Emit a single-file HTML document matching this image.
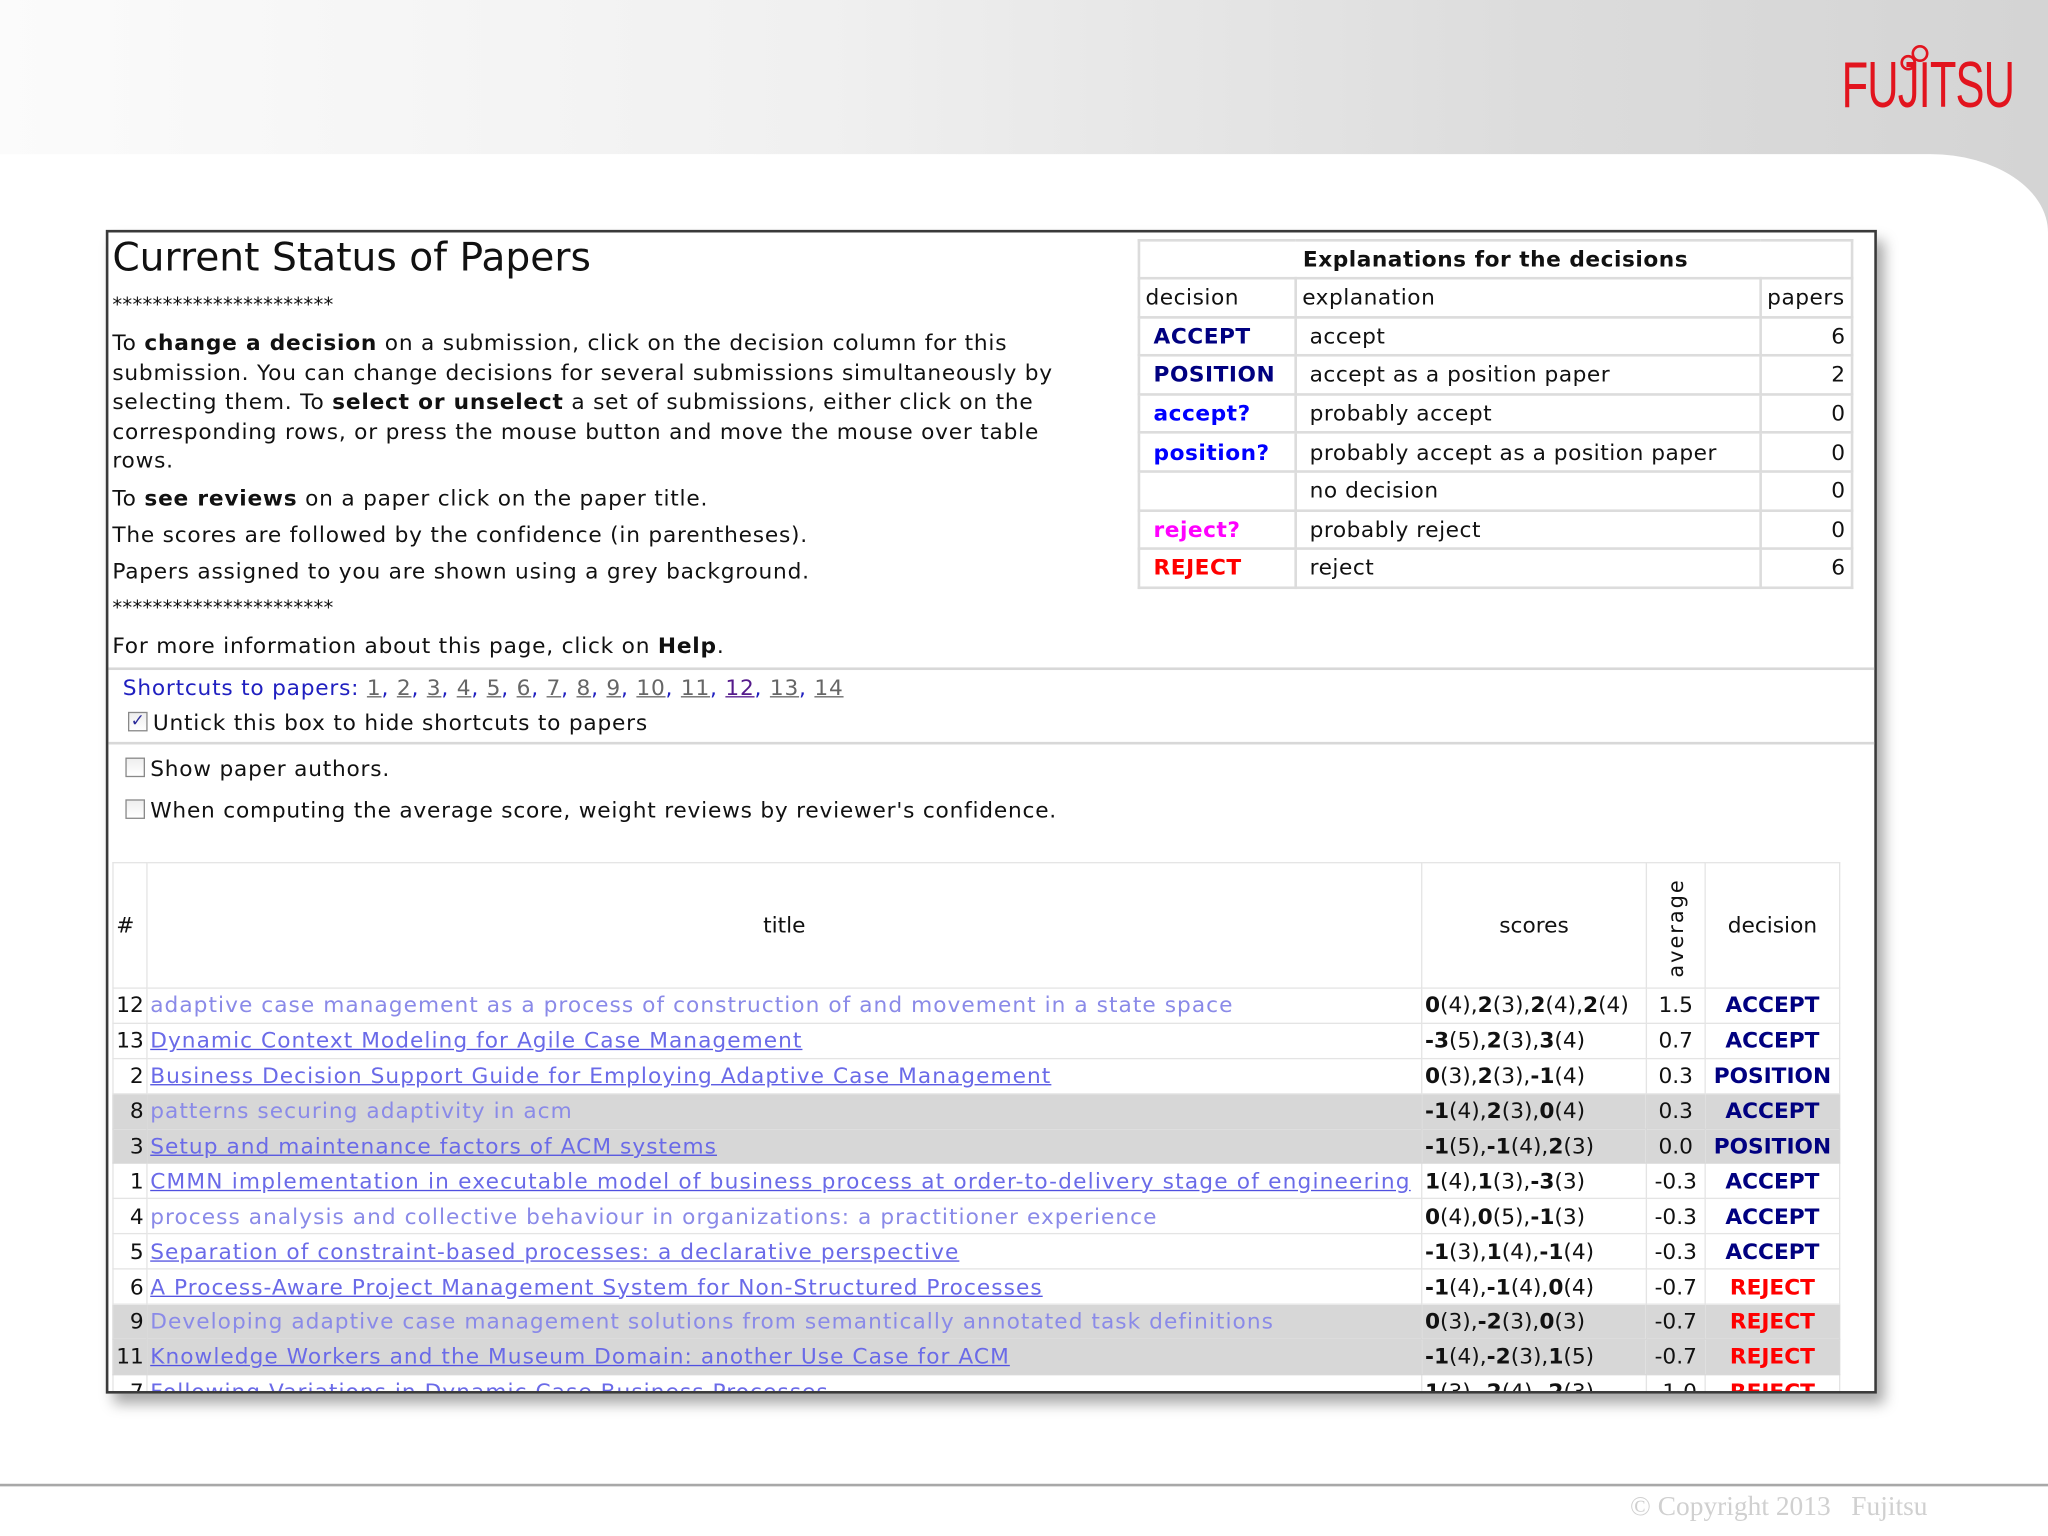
<!DOCTYPE html>
<html><head><meta charset="utf-8">
<style>
html,body{margin:0;padding:0;width:2048px;height:1536px;overflow:hidden;background:#fff}
#w{position:absolute;left:0;top:0;width:1568px;height:1176px;transform:scale(1.30612);transform-origin:0 0;font-family:"DejaVu Sans","Liberation Sans",sans-serif;color:#111;overflow:hidden}
.bg{position:absolute;left:0;top:0;width:1568px;height:260px;background:linear-gradient(90deg,#fbfbfb 0%,#f0f0f0 40%,#dcdcdc 75%,#d4d4d4 100%)}
.white{position:absolute;left:-20px;top:118px;width:1588px;height:1100px;background:#fff;border-top-right-radius:90px 60px}
.abs{position:absolute;white-space:nowrap}
.logo{position:absolute;left:1410px;top:36px;font-family:"Liberation Sans",sans-serif;font-size:50px;color:#e2141e;letter-spacing:-1px;transform:scaleX(0.665);transform-origin:0 0;font-weight:normal}
#frame{position:absolute;left:81px;top:176px;width:1352px;height:887px;border:2px solid #3a3a3a;background:#fff;box-shadow:6px 8px 10px rgba(0,0,0,0.35);overflow:hidden}
.t{font-size:16.6px;line-height:22.5px;letter-spacing:0.6px}
table{border-collapse:collapse}
.ex td{border:2px solid #dcdcdc;font-size:16.6px;height:27.6px;padding:0 4px;letter-spacing:0.4px}
.d1{color:#000080;font-weight:bold}
.d2{color:#0000ff;font-weight:bold}
.rq{color:#ff00ff;font-weight:bold}
.rj{color:#ff0000;font-weight:bold}
.mt{table-layout:fixed}
.mt td{border:1px solid #e4e4e4;font-size:16.6px;height:25.9px;padding:0 2px;white-space:nowrap;overflow:hidden}
.mt tr.g td{background:#d7d7d7;border-color:#d7d7d7}
.lnk{color:#6a6ae8;text-decoration:underline;text-decoration-color:#5050e0;letter-spacing:0.8px}
.lnk2{color:#8a8ae8;letter-spacing:0.8px}
.sc b{font-weight:bold}
.sc{font-size:16.6px}
.cb{display:inline-block;width:13px;height:13px;border:1px solid #888;background:linear-gradient(#eee,#fff);vertical-align:-1px;margin-right:4px;position:relative}
</style></head><body>
<div id="w">
<div class="bg"></div>
<div class="white"></div>
<div class="logo">FUJITSU</div>
<svg class="abs" style="left:1452px;top:32px" width="30" height="26" viewBox="0 0 30 26"><circle cx="9" cy="16" r="5" fill="none" stroke="#e2141e" stroke-width="2"/><circle cx="18" cy="9" r="5.5" fill="none" stroke="#e2141e" stroke-width="2"/></svg>

<div id="frame">
 <div class="abs" style="left:3px;top:2px;font-size:30px">Current Status of Papers</div>
 <div class="abs t" style="left:3px;top:44px;font-size:15px;letter-spacing:0.2px">**********************</div>
 <div class="abs t" style="left:3px;top:74px;width:752px;white-space:normal">To <b>change a decision</b> on a submission, click on the decision column for this submission. You can change decisions for several submissions simultaneously by selecting them. To <b>select or unselect</b> a set of submissions, either click on the corresponding rows, or press the mouse button and move the mouse over table rows.</div>
 <div class="abs t" style="left:3px;top:193px">To <b>see reviews</b> on a paper click on the paper title.</div>
 <div class="abs t" style="left:3px;top:221px">The scores are followed by the confidence (in parentheses).</div>
 <div class="abs t" style="left:3px;top:249px">Papers assigned to you are shown using a grey background.</div>
 <div class="abs t" style="left:3px;top:276px;font-size:15px;letter-spacing:0.2px">**********************</div>
 <div class="abs t" style="left:3px;top:306px">For more information about this page, click on <b>Help</b>.</div>
 <div class="abs" style="left:0;top:333px;width:1352px;border-top:2px solid #d8d8d8"></div>
 <div class="abs t" style="left:11px;top:338px;color:#2020c0">Shortcuts to papers: <span style="color:#666;text-decoration:underline">1</span>, <span style="color:#666;text-decoration:underline">2</span>, <span style="color:#666;text-decoration:underline">3</span>, <span style="color:#666;text-decoration:underline">4</span>, <span style="color:#666;text-decoration:underline">5</span>, <span style="color:#666;text-decoration:underline">6</span>, <span style="color:#666;text-decoration:underline">7</span>, <span style="color:#666;text-decoration:underline">8</span>, <span style="color:#666;text-decoration:underline">9</span>, <span style="color:#666;text-decoration:underline">10</span>, <span style="color:#666;text-decoration:underline">11</span>, <span style="color:#551a8b;text-decoration:underline">12</span>, <span style="color:#666;text-decoration:underline">13</span>, <span style="color:#666;text-decoration:underline">14</span></div>
 <div class="abs t" style="left:15px;top:365px"><span class="cb"><span style="position:absolute;left:1px;top:-4px;font-size:13px;color:#2a2a9a">✓</span></span>Untick this box to hide shortcuts to papers</div>
 <div class="abs" style="left:0;top:390px;width:1352px;border-top:2px solid #d8d8d8"></div>
 <div class="abs t" style="left:13px;top:400px"><span class="cb"></span>Show paper authors.</div>
 <div class="abs t" style="left:13px;top:432px"><span class="cb"></span>When computing the average score, weight reviews by reviewer's confidence.</div>

 <table class="ex abs" style="left:788px;top:5px;width:548px">
  <tr><td colspan="3" style="text-align:center;font-weight:bold;height:27px">Explanations for the decisions</td></tr>
  <tr><td style="width:110px">decision</td><td>explanation</td><td style="width:60px">papers</td></tr>
  <tr><td class="d1">&nbsp;ACCEPT</td><td>&nbsp;accept</td><td align="right">6</td></tr>
  <tr><td class="d1">&nbsp;POSITION</td><td>&nbsp;accept as a position paper</td><td align="right">2</td></tr>
  <tr><td class="d2">&nbsp;accept?</td><td>&nbsp;probably accept</td><td align="right">0</td></tr>
  <tr><td class="d2">&nbsp;position?</td><td>&nbsp;probably accept as a position paper</td><td align="right">0</td></tr>
  <tr><td></td><td>&nbsp;no decision</td><td align="right">0</td></tr>
  <tr><td class="rq">&nbsp;reject?</td><td>&nbsp;probably reject</td><td align="right">0</td></tr>
  <tr><td class="rj">&nbsp;REJECT</td><td>&nbsp;reject</td><td align="right">6</td></tr>
 </table>

 <table class="mt abs" style="left:3px;top:482px;width:1322px">
  <colgroup><col style="width:26px"><col style="width:976px"><col style="width:172px"><col style="width:45px"><col style="width:103px"></colgroup>
  <tr style="height:96px"><td style="height:94px">#</td><td style="text-align:center">title</td><td style="text-align:center">scores</td><td style="text-align:center;vertical-align:bottom;overflow:visible"><div style="transform:rotate(-90deg);font-size:16px;letter-spacing:1.5px;width:20px;margin:0 auto 8px">average</div></td><td style="text-align:center">decision</td></tr>
  <tr><td align="right">12</td><td><span class="lnk2">adaptive case management as a process of construction of and movement in a state space</span></td><td class="sc"><b>0</b>(4),<b>2</b>(3),<b>2</b>(4),<b>2</b>(4)</td><td align="center">1.5</td><td align="center" class="d1">ACCEPT</td></tr>
  <tr><td align="right">13</td><td><span class="lnk">Dynamic Context Modeling for Agile Case Management</span></td><td class="sc"><b>-3</b>(5),<b>2</b>(3),<b>3</b>(4)</td><td align="center">0.7</td><td align="center" class="d1">ACCEPT</td></tr>
  <tr><td align="right">2</td><td><span class="lnk">Business Decision Support Guide for Employing Adaptive Case Management</span></td><td class="sc"><b>0</b>(3),<b>2</b>(3),<b>-1</b>(4)</td><td align="center">0.3</td><td align="center" class="d1">POSITION</td></tr>
  <tr class="g"><td align="right">8</td><td><span class="lnk2">patterns securing adaptivity in acm</span></td><td class="sc"><b>-1</b>(4),<b>2</b>(3),<b>0</b>(4)</td><td align="center">0.3</td><td align="center" class="d1">ACCEPT</td></tr>
  <tr class="g"><td align="right">3</td><td><span class="lnk">Setup and maintenance factors of ACM systems</span></td><td class="sc"><b>-1</b>(5),<b>-1</b>(4),<b>2</b>(3)</td><td align="center">0.0</td><td align="center" class="d1">POSITION</td></tr>
  <tr><td align="right">1</td><td><span class="lnk" style="letter-spacing:0.9px">CMMN implementation in executable model of business process at order-to-delivery stage of engineering</span></td><td class="sc"><b>1</b>(4),<b>1</b>(3),<b>-3</b>(3)</td><td align="center">-0.3</td><td align="center" class="d1">ACCEPT</td></tr>
  <tr><td align="right">4</td><td><span class="lnk2">process analysis and collective behaviour in organizations: a practitioner experience</span></td><td class="sc"><b>0</b>(4),<b>0</b>(5),<b>-1</b>(3)</td><td align="center">-0.3</td><td align="center" class="d1">ACCEPT</td></tr>
  <tr><td align="right">5</td><td><span class="lnk">Separation of constraint-based processes: a declarative perspective</span></td><td class="sc"><b>-1</b>(3),<b>1</b>(4),<b>-1</b>(4)</td><td align="center">-0.3</td><td align="center" class="d1">ACCEPT</td></tr>
  <tr><td align="right">6</td><td><span class="lnk">A Process-Aware Project Management System for Non-Structured Processes</span></td><td class="sc"><b>-1</b>(4),<b>-1</b>(4),<b>0</b>(4)</td><td align="center">-0.7</td><td align="center" class="rj">REJECT</td></tr>
  <tr class="g"><td align="right">9</td><td><span class="lnk2">Developing adaptive case management solutions from semantically annotated task definitions</span></td><td class="sc"><b>0</b>(3),<b>-2</b>(3),<b>0</b>(3)</td><td align="center">-0.7</td><td align="center" class="rj">REJECT</td></tr>
  <tr class="g"><td align="right">11</td><td><span class="lnk">Knowledge Workers and the Museum Domain: another Use Case for ACM</span></td><td class="sc"><b>-1</b>(4),<b>-2</b>(3),<b>1</b>(5)</td><td align="center">-0.7</td><td align="center" class="rj">REJECT</td></tr>
  <tr><td align="right">7</td><td><span class="lnk">Following Variations in Dynamic Case Business Processes</span></td><td class="sc"><b>1</b>(3),<b>-2</b>(4),<b>-2</b>(3)</td><td align="center">-1.0</td><td align="center" class="rj">REJECT</td></tr>
 </table>
</div>

<div class="abs" style="left:0;top:1136px;width:1568px;border-top:2px solid #a8a8a8"></div>
<div class="abs" style="left:1248px;top:1141px;font-family:'Liberation Serif',serif;font-size:21px;color:#d0d0d0">© Copyright 2013&nbsp;&nbsp;&nbsp;Fujitsu</div>
</div>
</body></html>
